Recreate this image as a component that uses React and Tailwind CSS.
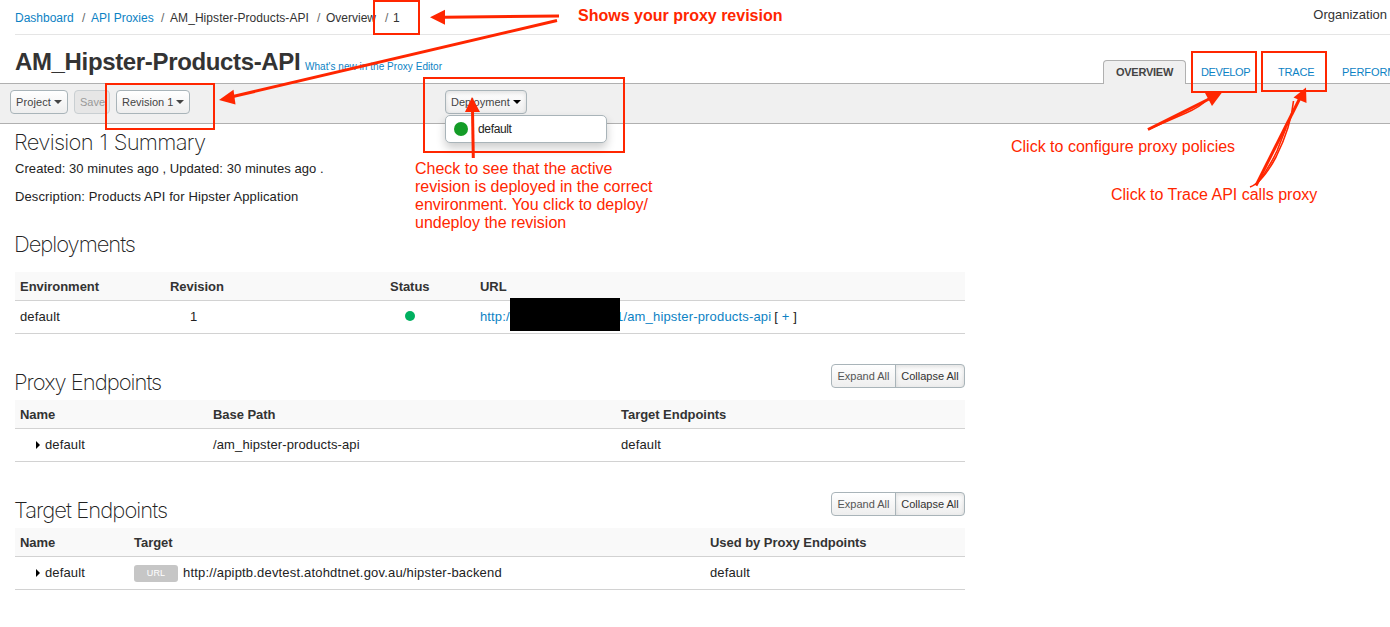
import React from "react";

const base = "font-['Helvetica_Neue','Liberation_Sans',Arial,sans-serif]";
const btn =
  "relative flex h-6 shrink-0 items-center whitespace-nowrap rounded-[4px] border border-[#a9b4b9] bg-linear-to-b from-white to-[#eeeeee] text-[11px] text-[#444]";

function Caret({ color = "#444" }) {
  return (
    <svg width="8" height="4" viewBox="0 0 8 4" className="ml-[3px] shrink-0">
      <path d="M0 0h8L4 4z" fill={color} />
    </svg>
  );
}

function Crumbs() {
  return (
    <nav className="flex h-[34px] items-center whitespace-nowrap pt-[2px] text-xs text-[#333]">
      <a className="w-[67px] text-[#0c82c4]">Dashboard</a>
      <span className="w-[9px] text-[#666]">/</span>
      <a className="w-[70px] text-[#0c82c4]">API Proxies</a>
      <span className="w-[9px] text-[#666]">/</span>
      <span className="w-[147px] tracking-[0.07px]">AM_Hipster-Products-API</span>
      <span className="w-[9px] text-[#666]">/</span>
      <span className="w-[59px]">Overview</span>
      <span className="w-[8px] text-[#666]">/</span>
      <span>1</span>
      <span className="ml-auto -mt-[6px] pr-[3px] text-[13px]">Organization</span>
    </nav>
  );
}

function SectionTitle({ children, className = "" }) {
  return (
    <h2
      className={
        "whitespace-nowrap font-['Inter',sans-serif] text-[22px] font-extralight leading-7 text-[#222] " + className
      }
    >
      {children}
    </h2>
  );
}

function ExpandCollapse() {
  return (
    <div className="mb-[4px] flex h-6 w-[134px] overflow-hidden rounded-[4px] border border-[#a9b4b9] bg-linear-to-b from-white to-[#eeeeee] text-[11px] text-[#555]">
      <span className="flex w-16 items-center justify-center whitespace-nowrap border-r border-[#a9b4b9]">Expand All</span>
      <span className="flex flex-1 items-center justify-center whitespace-nowrap text-[#333] shadow-[inset_0_2px_4px_rgba(0,0,0,0.12)]">
        Collapse All
      </span>
    </div>
  );
}

function Table({ cols, head, row }) {
  return (
    <div className="w-[950px] text-[13px] text-[#222]">
      <div className={"grid h-[29px] items-center border-b border-[#d2d2d2] bg-[#f9f9f9] pl-[5px] pt-[2px] font-bold tracking-[-0.04px] text-[#333] " + cols}>
        {head.map((h) => (
          <span key={h}>{h}</span>
        ))}
      </div>
      <div className={"grid h-[33px] items-center border-b border-[#d2d2d2] pl-[5px] tracking-[0.12px] " + cols}>
        {row.map((c, i) => (
          <div key={i} className="flex items-center whitespace-nowrap">
            {c}
          </div>
        ))}
      </div>
    </div>
  );
}

function Disclosure() {
  return (
    <>
      <svg width="4" height="8" viewBox="0 0 4 8" className="-mt-px ml-4 mr-[5px] shrink-0">
        <path d="M0 0v8l4-4z" fill="#000" />
      </svg>
      <span>default</span>
    </>
  );
}

function Annotations() {
  const note = "absolute whitespace-nowrap text-[#ff2600] text-base leading-[18px]";
  return (
    <div className="pointer-events-none absolute inset-0 z-30">
      <svg width="1390" height="627" viewBox="0 0 1390 627" className="absolute inset-0">
        <g fill="none" stroke="#ff2600" strokeWidth="2">
          <rect x="374" y="1" width="45" height="33" />
          <rect x="106" y="84" width="108" height="45" />
          <rect x="424" y="78" width="200" height="74" />
          <rect x="1192" y="52" width="64" height="40" />
          <rect x="1262" y="52" width="64" height="39" />
        </g>
        <g fill="none" stroke="#ff2600" strokeWidth="3">
          <path d="M444 17.3L559 16" />
          <path d="M233 96.5L557 20.5" />
          <path d="M473.3 158L472.5 110" />
          <path d="M1148 129.500L1210 98.500" />
          <path d="M1256 185.500L1300 98" />
        </g>
        <g fill="none" stroke="#ff2600" strokeWidth="1.6">
          <path d="M1148 129.500L1186 113Q1200 107 1208 99" />
          <path d="M1250 187Q1262 183 1276 157Q1291 127 1293.500 101" />
          <path d="M1256 185Q1268 170 1277 151L1286 128" />
        </g>
        <g fill="#ff2600">
          <path d="M430 17.300L445 9.800V24.800z" />
          <path d="M219 100L233.500 89.800L235.500 104.500z" />
          <path d="M472 97L465 112H480z" />
          <path d="M1222 92.500L1205 93L1212 106z" />
          <path d="M1306 87.500L1293.500 97.500L1306.500 103z" />
        </g>
      </svg>
      <p className={note + " left-[578px] top-[7px] font-bold"}>Shows your proxy revision</p>
      <p className={note + " left-[415px] top-[160px] leading-[17.7px]"}>
        Check to see that the active
        <br />
        revision is deployed in the correct
        <br />
        environment. You click to deploy/
        <br />
        undeploy the revision
      </p>
      <p className={note + " left-[1011px] top-[138px]"}>Click to configure proxy policies</p>
      <p className={note + " left-[1111px] top-[186px]"}>Click to Trace API calls proxy</p>
    </div>
  );
}

export default function App() {
  return (
    <div className={"relative h-[627px] w-[1390px] overflow-hidden bg-white " + base}>
      <header className="pl-[15px]">
        <Crumbs />
        <div className="flex h-[49px] items-end border-t border-[#e5e5e5]">
          <h1 className="mb-[5px] w-[290px] whitespace-nowrap text-2xl font-bold tracking-[-0.35px] text-[#333]">
            AM_Hipster-Products-API
          </h1>
          <a className="mb-[9px] whitespace-nowrap text-[10px] leading-[15px] tracking-[0.04px] text-[#0c82c4]">What's new in the Proxy Editor</a>
          <div className="relative z-10 -mb-px ml-auto flex w-[287px] items-end overflow-hidden whitespace-nowrap text-[11px] text-[#0c82c4]">
            <span className="flex h-6 w-[83px] shrink-0 items-center justify-center rounded-t-[4px] border border-b-0 border-[#b0b0b0] bg-[#f0f0f0] font-bold tracking-[-0.25px] text-[#444]">
              OVERVIEW
            </span>
            <span className="flex h-6 w-[77px] shrink-0 items-center pl-[15px] tracking-[-0.4px]">DEVELOP</span>
            <span className="flex h-6 w-16 shrink-0 items-center pl-[15px] tracking-[-0.2px]">TRACE</span>
            <span className="flex h-6 shrink-0 items-center pl-[15px] tracking-[-0.1px]">PERFORMANCE</span>
          </div>
        </div>
      </header>

      <div className="flex h-[41px] items-start border-y border-[#b0b0b0] bg-[#f0f0f0] pl-[10px] pt-[6px]">
        <div className={btn + " w-[58px] pl-[5px] tracking-[0.1px]"}>
          Project
          <Caret />
        </div>
        <div className="ml-[6px] flex h-6 w-9 shrink-0 items-center rounded-[4px] border border-[#c9cfd2] bg-[#e6e6e6] pl-[5px] text-[11px] text-[#999]">
          Save
        </div>
        <div className={btn + " ml-[6px] w-[74px] pl-[5px]"}>
          Revision 1
          <Caret />
        </div>
        <div className={btn + " ml-[255px] w-[82px] pl-[5px] shadow-[inset_0_2px_4px_rgba(0,0,0,0.12)]"}>
          Deployment
          <Caret color="#000" />
          <div className="absolute -left-px top-6 z-20 flex h-7 w-[162px] items-center rounded-[5px] border border-[#a9b4b9] bg-white text-xs tracking-[-0.35px] text-[#222] shadow-[0_5px_10px_rgba(0,0,0,0.2)]">
            <span className="ml-2 mr-[10px] size-[14px] rounded-full bg-[#149c27]" />
            default
          </div>
        </div>
      </div>

      <main className="w-[965px] pl-[15px]">
        <SectionTitle className="mt-[4px] -ml-px tracking-[-0.7px] [word-spacing:1px]">Revision 1 Summary</SectionTitle>
        <p className="mt-[3px] text-[13px] leading-5 tracking-[0.06px] text-[#222]">Created: 30 minutes ago , Updated: 30 minutes ago .</p>
        <p className="mt-2 text-[13px] leading-5 tracking-[0.12px] text-[#222]">Description: Products API for Hipster Application</p>

        <SectionTitle className="mt-[23px] -ml-px mb-[14px] tracking-[-1.05px]">Deployments</SectionTitle>
        <Table
          cols="grid-cols-[150px_220px_90px_1fr]"
          head={["Environment", "Revision", "Status", "URL"]}
          row={[
            "default",
            <span className="pl-5">1</span>,
            <span className="relative -top-px ml-[15px] size-[10px] rounded-full bg-[#00b060]" />,
            <>
              <a className="w-[30px] overflow-hidden text-[#0c82c4]">http:/</a>
              <span className="relative -top-[3px] -my-2 h-[33px] w-[110px] shrink-0 bg-black" />
              <a className="tracking-[0.17px] text-[#0c82c4]">
                <span className="-ml-[4px] inline-block [clip-path:inset(0_0_0_4px)]">1</span>/am_hipster-products-api
              </a>
              <span className="ml-[3px]">
                [ <a className="text-[#0c82c4]">+</a> ]
              </span>
            </>,
          ]}
        />

        <div className="mt-[30px] flex h-9 items-end justify-between">
          <SectionTitle className="mb-[4px] -ml-px tracking-[-1px]">Proxy Endpoints</SectionTitle>
          <div className="pb-2">
            <ExpandCollapse />
          </div>
        </div>
        <Table
          cols="grid-cols-[193px_408px_1fr]"
          head={["Name", "Base Path", "Target Endpoints"]}
          row={[<Disclosure />, "/am_hipster-products-api", "default"]}
        />

        <div className="mt-[30px] flex h-9 items-end justify-between">
          <SectionTitle className="mb-[4px] -ml-px tracking-[-0.95px]">Target Endpoints</SectionTitle>
          <div className="pb-2">
            <ExpandCollapse />
          </div>
        </div>
        <Table
          cols="grid-cols-[114px_576px_1fr]"
          head={["Name", "Target", "Used by Proxy Endpoints"]}
          row={[
            <Disclosure />,
            <>
              <span className="mr-[5px] flex h-[17px] w-11 items-center justify-center rounded-[3px] bg-[#c6c6c6] pt-[2px] text-[9px] text-white">
                URL
              </span>
              <span className="tracking-[0.18px]">http://apiptb.devtest.atohdtnet.gov.au/hipster-backend</span>
            </>,
            "default",
          ]}
        />
      </main>
      <Annotations />
    </div>
  );
}
